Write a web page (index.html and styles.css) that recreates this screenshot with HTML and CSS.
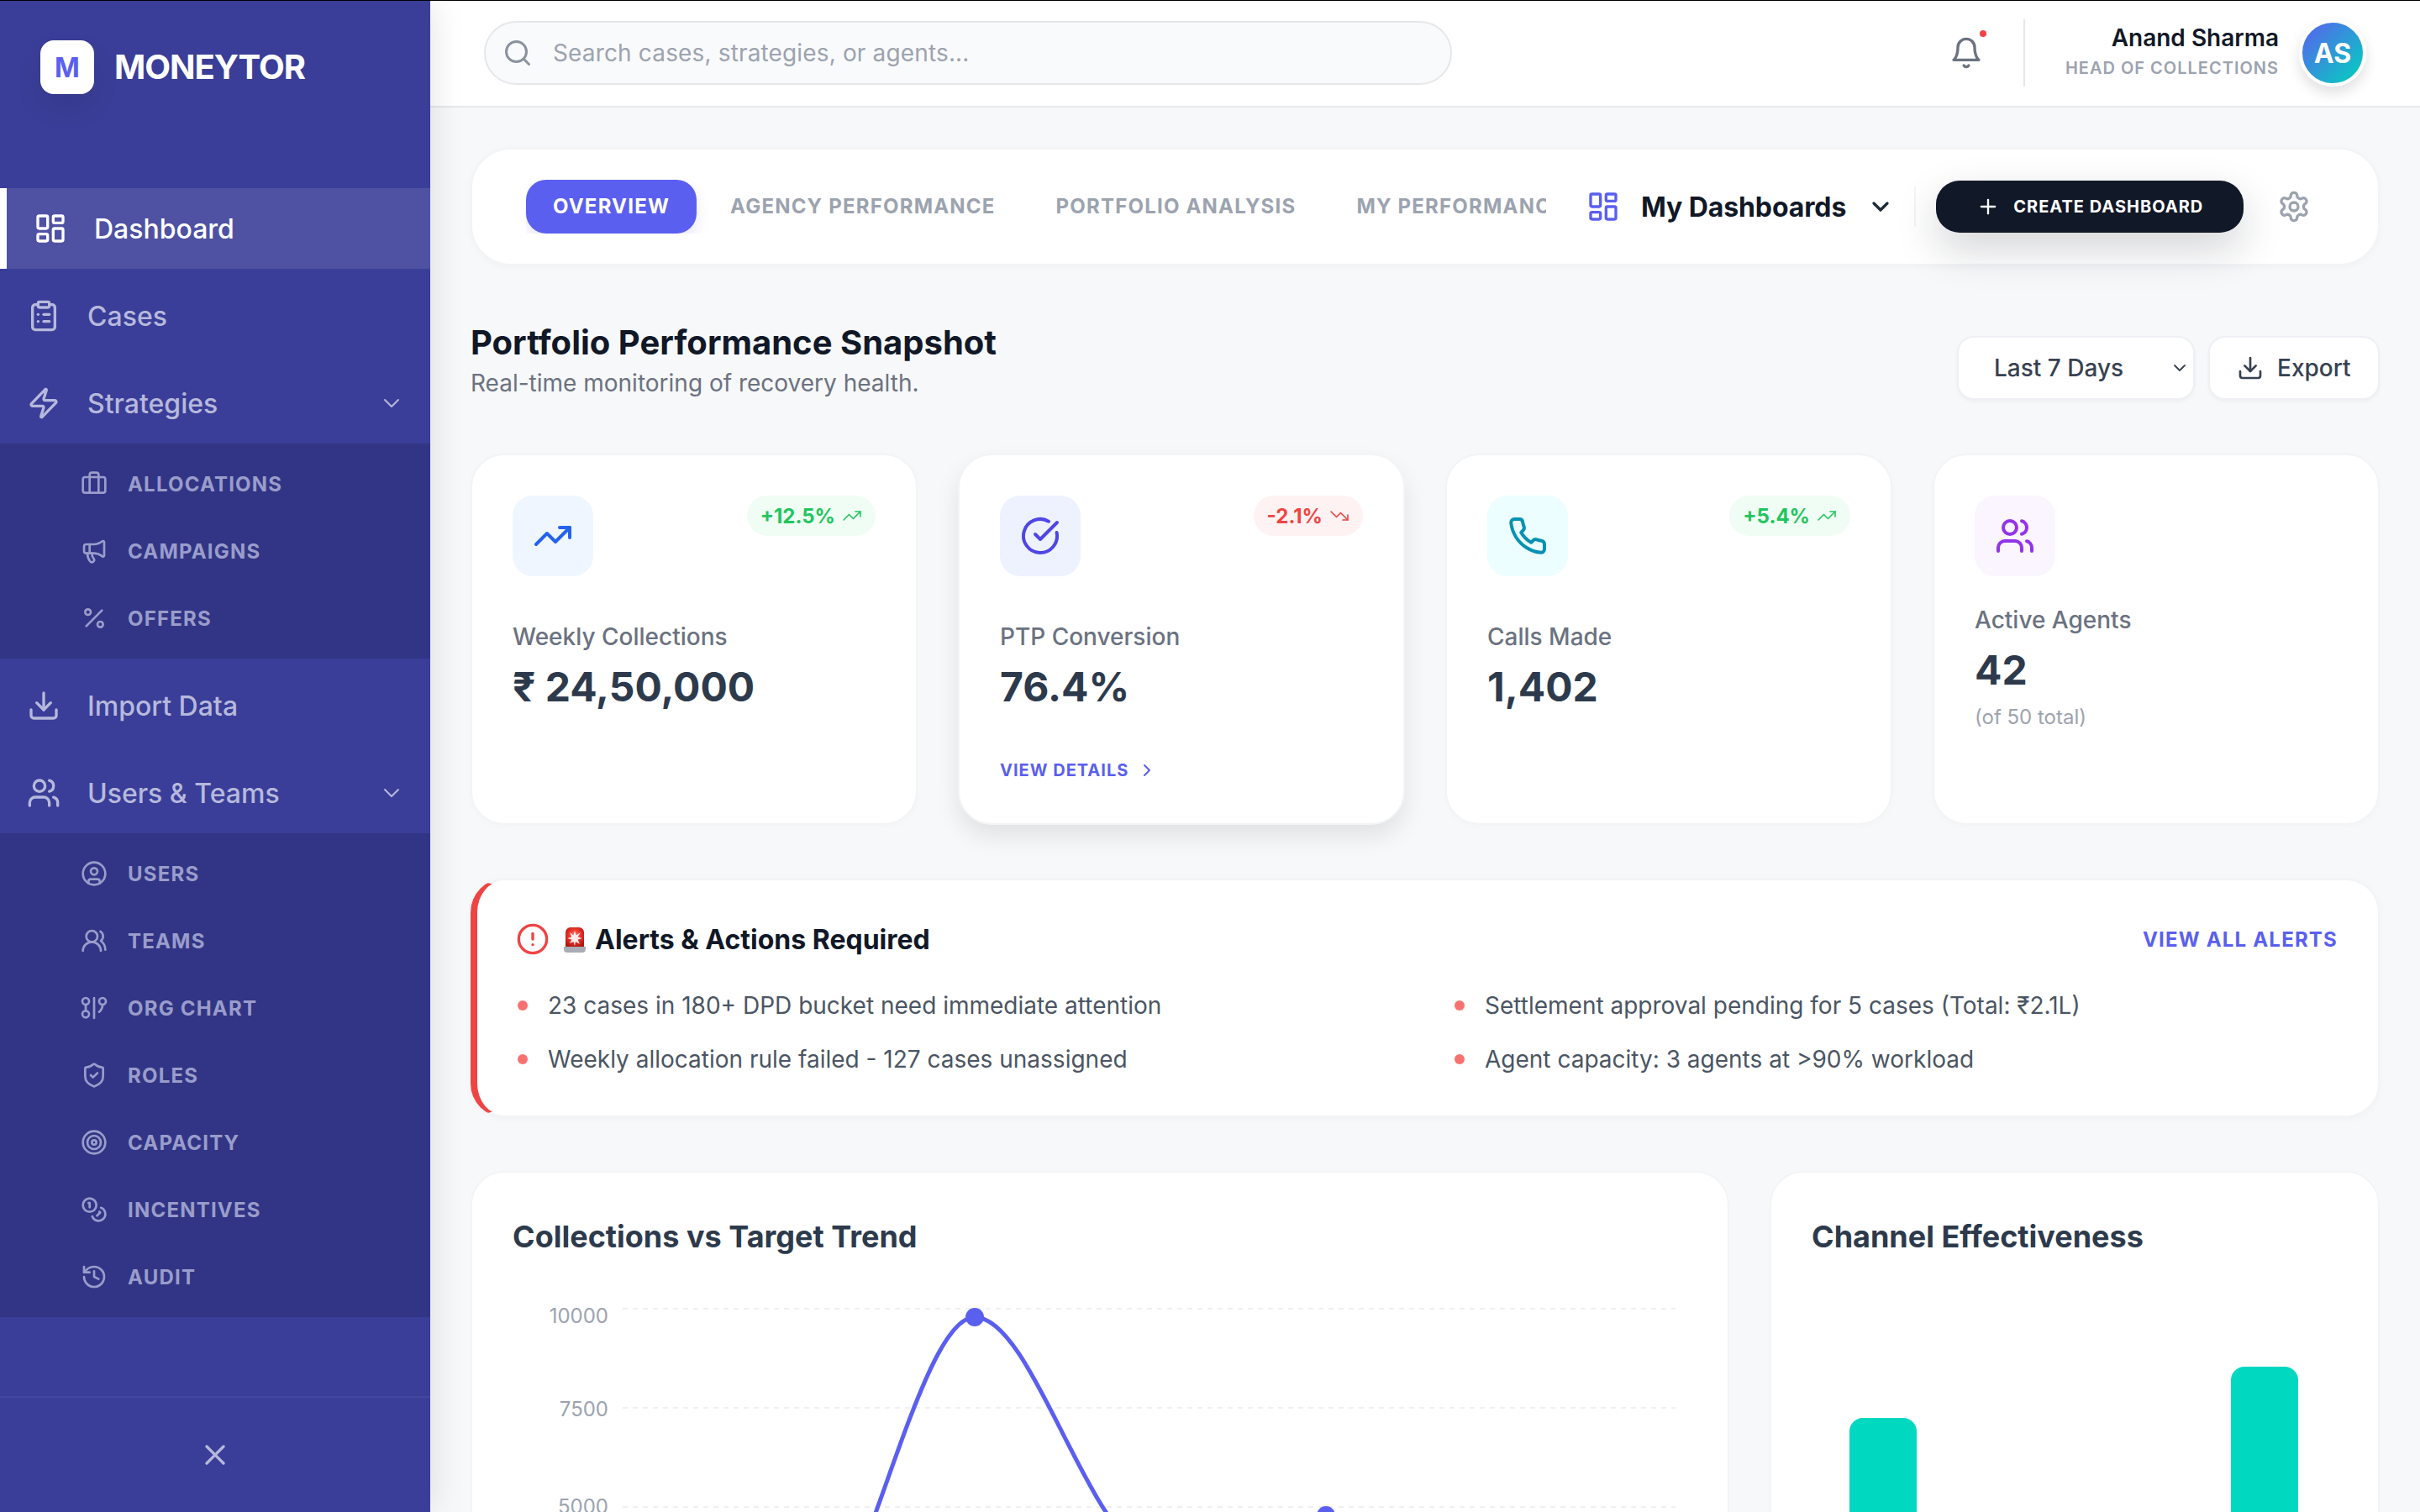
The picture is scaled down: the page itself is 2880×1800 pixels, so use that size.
FILE: index.html
```html
<!DOCTYPE html>
<html lang="en">
<head>
<meta charset="utf-8">
<title>Moneytor</title>
<link rel="stylesheet" href="styles.css">
</head>
<body>
<svg class="sprite" xmlns="http://www.w3.org/2000/svg">
  <symbol id="i-grid" viewBox="0 0 24 24"><rect x="3" y="3" width="7" height="9" rx="1"/><rect x="14" y="3" width="7" height="5" rx="1"/><rect x="14" y="12" width="7" height="9" rx="1"/><rect x="3" y="16" width="7" height="5" rx="1"/></symbol>
  <symbol id="i-clip" viewBox="0 0 24 24"><rect x="8" y="2" width="8" height="4" rx="1"/><path d="M16 4h2a2 2 0 0 1 2 2v14a2 2 0 0 1-2 2H6a2 2 0 0 1-2-2V6a2 2 0 0 1 2-2h2"/><path d="M12 11h4"/><path d="M12 16h4"/><path d="M8 11h.01"/><path d="M8 16h.01"/></symbol>
  <symbol id="i-zap" viewBox="0 0 24 24"><path d="M4 14a1 1 0 0 1-.78-1.63l9.9-10.2a.5.5 0 0 1 .86.46l-1.92 6.02A1 1 0 0 0 13 10h7a1 1 0 0 1 .78 1.63l-9.9 10.2a.5.5 0 0 1-.86-.46l1.92-6.02A1 1 0 0 0 11 14z"/></symbol>
  <symbol id="i-down" viewBox="0 0 24 24"><path d="m6 9 6 6 6-6"/></symbol>
  <symbol id="i-right" viewBox="0 0 24 24"><path d="m9 18 6-6-6-6"/></symbol>
  <symbol id="i-brief" viewBox="0 0 24 24"><path d="M16 20V4a2 2 0 0 0-2-2h-4a2 2 0 0 0-2 2v16"/><rect x="2" y="6" width="20" height="14" rx="2"/></symbol>
  <symbol id="i-mega" viewBox="0 0 24 24"><path d="M11 6a13 13 0 0 0 8.4-2.8A1 1 0 0 1 21 4v12a1 1 0 0 1-1.6.8A13 13 0 0 0 11 14H5a2 2 0 0 1-2-2V8a2 2 0 0 1 2-2z"/><path d="M6 14a12 12 0 0 0 2.4 7.2 2 2 0 0 0 3.2-2.4A8 8 0 0 1 10 14"/><path d="M8 6v8"/></symbol>
  <symbol id="i-pct" viewBox="0 0 24 24"><line x1="19" y1="5" x2="5" y2="19"/><circle cx="6.5" cy="6.5" r="2.5"/><circle cx="17.5" cy="17.5" r="2.5"/></symbol>
  <symbol id="i-dl" viewBox="0 0 24 24"><path d="M21 15v4a2 2 0 0 1-2 2H5a2 2 0 0 1-2-2v-4"/><polyline points="7 10 12 15 17 10"/><line x1="12" y1="15" x2="12" y2="3"/></symbol>
  <symbol id="i-users" viewBox="0 0 24 24"><path d="M16 21v-2a4 4 0 0 0-4-4H6a4 4 0 0 0-4 4v2"/><circle cx="9" cy="7" r="4"/><path d="M22 21v-2a4 4 0 0 0-3-3.87"/><path d="M16 3.13a4 4 0 0 1 0 7.75"/></symbol>
  <symbol id="i-cuser" viewBox="0 0 24 24"><circle cx="12" cy="12" r="10"/><circle cx="12" cy="10" r="3"/><path d="M7 20.662V19a2 2 0 0 1 2-2h6a2 2 0 0 1 2 2v1.662"/></symbol>
  <symbol id="i-uround" viewBox="0 0 24 24"><path d="M18 21a8 8 0 0 0-16 0"/><circle cx="10" cy="8" r="5"/><path d="M22 20c0-3.37-2-6.5-4-8a5 5 0 0 0-.45-8.3"/></symbol>
  <symbol id="i-org" viewBox="0 0 24 24"><circle cx="4.5" cy="6" r="3"/><path d="M4.5 9v5"/><circle cx="4.5" cy="17.5" r="3"/><path d="M12 3v18"/><circle cx="19.5" cy="6" r="3"/><path d="M19.5 9a8 8 0 0 1-3 6.5"/></symbol>
  <symbol id="i-shield" viewBox="0 0 24 24"><path d="M20 13c0 5-3.5 7.5-7.66 8.95a1 1 0 0 1-.67-.01C7.5 20.5 4 18 4 13V6a1 1 0 0 1 1-1c2 0 4.5-1.2 6.24-2.72a1.17 1.17 0 0 1 1.52 0C14.51 3.81 17 5 19 5a1 1 0 0 1 1 1z"/><path d="m9 12 2 2 4-4"/></symbol>
  <symbol id="i-target" viewBox="0 0 24 24"><circle cx="12" cy="12" r="10"/><circle cx="12" cy="12" r="6"/><circle cx="12" cy="12" r="2"/></symbol>
  <symbol id="i-coins" viewBox="0 0 24 24"><circle cx="8" cy="8" r="6"/><path d="M18.09 10.37A6 6 0 1 1 10.34 18"/><path d="M7 6h1v4"/><path d="m16.71 13.88.7.71-2.82 2.82"/></symbol>
  <symbol id="i-hist" viewBox="0 0 24 24"><path d="M3 12a9 9 0 1 0 9-9 9.75 9.75 0 0 0-6.74 2.74L3 8"/><path d="M3 3v5h5"/><path d="M12 7v5l4 2"/></symbol>
  <symbol id="i-x" viewBox="0 0 24 24"><path d="M18 6 6 18"/><path d="m6 6 12 12"/></symbol>
  <symbol id="i-search" viewBox="0 0 24 24"><circle cx="11" cy="11" r="8"/><path d="m21 21-4.3-4.3"/></symbol>
  <symbol id="i-bell" viewBox="0 0 24 24"><path d="M6 8a6 6 0 0 1 12 0c0 7 3 9 3 9H3s3-2 3-9"/><path d="M10.3 21a1.94 1.94 0 0 0 3.4 0"/></symbol>
  <symbol id="i-plus" viewBox="0 0 24 24"><path d="M5 12h14"/><path d="M12 5v14"/></symbol>
  <symbol id="i-gear" viewBox="0 0 24 24"><path d="M12.22 2h-.44a2 2 0 0 0-2 2v.18a2 2 0 0 1-1 1.73l-.43.25a2 2 0 0 1-2 0l-.15-.08a2 2 0 0 0-2.73.73l-.22.38a2 2 0 0 0 .73 2.73l.15.1a2 2 0 0 1 1 1.72v.51a2 2 0 0 1-1 1.74l-.15.09a2 2 0 0 0-.73 2.73l.22.38a2 2 0 0 0 2.73.73l.15-.08a2 2 0 0 1 2 0l.43.25a2 2 0 0 1 1 1.73V20a2 2 0 0 0 2 2h.44a2 2 0 0 0 2-2v-.18a2 2 0 0 1 1-1.73l.43-.25a2 2 0 0 1 2 0l.15.08a2 2 0 0 0 2.73-.73l.22-.39a2 2 0 0 0-.73-2.73l-.15-.08a2 2 0 0 1-1-1.74v-.5a2 2 0 0 1 1-1.74l.15-.09a2 2 0 0 0 .73-2.73l-.22-.38a2 2 0 0 0-2.73-.73l-.15.08a2 2 0 0 1-2 0l-.43-.25a2 2 0 0 1-1-1.73V4a2 2 0 0 0-2-2z"/><circle cx="12" cy="12" r="3"/></symbol>
  <symbol id="i-tup" viewBox="0 0 24 24"><polyline points="22 7 13.5 15.5 8.5 10.5 2 17"/><polyline points="16 7 22 7 22 13"/></symbol>
  <symbol id="i-tdown" viewBox="0 0 24 24"><polyline points="22 17 13.5 8.5 8.5 13.5 2 7"/><polyline points="16 17 22 17 22 11"/></symbol>
  <symbol id="i-check" viewBox="0 0 24 24"><path d="M21.801 10A10 10 0 1 1 17 3.335"/><path d="m9 11 3 3L22 4"/></symbol>
  <symbol id="i-phone" viewBox="0 0 24 24"><path d="M22 16.92v3a2 2 0 0 1-2.18 2 19.79 19.79 0 0 1-8.63-3.07 19.5 19.5 0 0 1-6-6 19.79 19.79 0 0 1-3.07-8.67A2 2 0 0 1 4.11 2h3a2 2 0 0 1 2 1.72 12.84 12.84 0 0 0 .7 2.81 2 2 0 0 1-.45 2.11L8.09 9.91a16 16 0 0 0 6 6l1.27-1.27a2 2 0 0 1 2.11-.45 12.84 12.84 0 0 0 2.81.7A2 2 0 0 1 22 16.92z"/></symbol>
  <symbol id="i-alert" viewBox="0 0 24 24"><circle cx="12" cy="12" r="10"/><line x1="12" y1="8" x2="12" y2="12"/><line x1="12" y1="16" x2="12.01" y2="16"/></symbol>
</svg>

<div class="topline"></div>
<div class="app">
  <aside class="sidebar">
    <div class="brand">
      <div class="logo">M</div>
      <span class="brand-name">MONEYTOR</span>
    </div>
    <nav class="nav">
      <a class="nav-item active"><svg class="ic ic40"><use href="#i-grid"/></svg><span>Dashboard</span></a>
      <a class="nav-item"><svg class="ic ic40"><use href="#i-clip"/></svg><span>Cases</span></a>
      <a class="nav-item"><svg class="ic ic40"><use href="#i-zap"/></svg><span>Strategies</span><svg class="ic caret"><use href="#i-down"/></svg></a>
      <div class="sub">
        <a class="sub-item"><svg class="ic ic32"><use href="#i-brief"/></svg>Allocations</a>
        <a class="sub-item"><svg class="ic ic32"><use href="#i-mega"/></svg>Campaigns</a>
        <a class="sub-item"><svg class="ic ic32"><use href="#i-pct"/></svg>Offers</a>
      </div>
      <a class="nav-item"><svg class="ic ic40"><use href="#i-dl"/></svg><span>Import Data</span></a>
      <a class="nav-item"><svg class="ic ic40"><use href="#i-users"/></svg><span>Users &amp; Teams</span><svg class="ic caret"><use href="#i-down"/></svg></a>
      <div class="sub">
        <a class="sub-item"><svg class="ic ic32"><use href="#i-cuser"/></svg>Users</a>
        <a class="sub-item"><svg class="ic ic32"><use href="#i-uround"/></svg>Teams</a>
        <a class="sub-item"><svg class="ic ic32"><use href="#i-org"/></svg>Org Chart</a>
        <a class="sub-item"><svg class="ic ic32"><use href="#i-shield"/></svg>Roles</a>
        <a class="sub-item"><svg class="ic ic32"><use href="#i-target"/></svg>Capacity</a>
        <a class="sub-item"><svg class="ic ic32"><use href="#i-coins"/></svg>Incentives</a>
        <a class="sub-item"><svg class="ic ic32"><use href="#i-hist"/></svg>Audit</a>
      </div>
    </nav>
    <div class="side-foot"><svg class="ic ic40"><use href="#i-x"/></svg></div>
  </aside>

  <div class="main">
    <header class="topbar">
      <div class="search">
        <svg class="ic search-ic"><use href="#i-search"/></svg>
        <span class="search-text">Search cases, strategies, or agents...</span>
      </div>
      <div class="top-right">
        <div class="bell"><svg class="ic ic40"><use href="#i-bell"/></svg><span class="bell-dot"></span></div>
        <div class="top-div"></div>
        <div class="who">
          <div class="who-name">Anand Sharma</div>
          <div class="who-role">Head of Collections</div>
        </div>
        <div class="avatar">AS</div>
      </div>
    </header>

    <main class="content">
      <section class="tabbar">
        <div class="tabs">
          <span class="tab on">Overview</span>
          <span class="tab">Agency Performance</span>
          <span class="tab">Portfolio Analysis</span>
          <span class="tab">My Performance</span>
        </div>
        <div class="dash-pick">
          <svg class="ic ic40 dash-ic"><use href="#i-grid"/></svg>
          <span class="dash-name">My Dashboards</span>
          <svg class="ic dash-caret"><use href="#i-down"/></svg>
        </div>
        <div class="tab-div"></div>
        <div class="create"><svg class="ic ic28"><use href="#i-plus"/></svg>Create Dashboard</div>
        <svg class="ic ic40 gear"><use href="#i-gear"/></svg>
      </section>

      <section class="heading">
        <div>
          <h1 class="title">Portfolio Performance Snapshot</h1>
          <p class="subtitle">Real-time monitoring of recovery health.</p>
        </div>
        <div class="head-actions">
          <div class="ctl select"><span>Last 7 Days</span><svg class="ic sel-caret"><use href="#i-down"/></svg></div>
          <div class="ctl export"><svg class="ic ic32"><use href="#i-dl"/></svg><span>Export</span></div>
        </div>
      </section>

      <section class="kpis">
        <article class="kpi">
          <div class="kpi-top">
            <div class="kpi-ic blue"><svg class="ic ic48"><use href="#i-tup"/></svg></div>
            <div class="badge up">+12.5%<svg class="ic ic24"><use href="#i-tup"/></svg></div>
          </div>
          <div class="kpi-label">Weekly Collections</div>
          <div class="kpi-val">₹ 24,50,000</div>
        </article>
        <article class="kpi hover">
          <div class="kpi-top">
            <div class="kpi-ic indigo"><svg class="ic ic48"><use href="#i-check"/></svg></div>
            <div class="badge dn">-2.1%<svg class="ic ic24"><use href="#i-tdown"/></svg></div>
          </div>
          <div class="kpi-label">PTP Conversion</div>
          <div class="kpi-val">76.4%</div>
          <div class="details">View Details<svg class="ic ic24"><use href="#i-right"/></svg></div>
        </article>
        <article class="kpi">
          <div class="kpi-top">
            <div class="kpi-ic cyan"><svg class="ic ic48"><use href="#i-phone"/></svg></div>
            <div class="badge up">+5.4%<svg class="ic ic24"><use href="#i-tup"/></svg></div>
          </div>
          <div class="kpi-label">Calls Made</div>
          <div class="kpi-val">1,402</div>
        </article>
        <article class="kpi">
          <div class="kpi-top tight">
            <div class="kpi-ic purple"><svg class="ic ic48"><use href="#i-users"/></svg></div>
          </div>
          <div class="kpi-label">Active Agents</div>
          <div class="kpi-val">42</div>
          <div class="kpi-note">(of 50 total)</div>
        </article>
      </section>

      <section class="alerts">
        <div class="alerts-head">
          <div class="alerts-title">
            <svg class="ic ic40 alert-ic"><use href="#i-alert"/></svg>
            <svg class="siren" viewBox="0 0 26 32"><defs><radialGradient id="sirenG" cx=".5" cy=".42" r=".62"><stop offset="0" stop-color="#ff8a80"/><stop offset=".45" stop-color="#ef3b32"/><stop offset="1" stop-color="#b3140f"/></radialGradient></defs><path class="siren-body" d="M2 25V8a6 6 0 0 1 6-6h10a6 6 0 0 1 6 6v17z"/><path class="siren-base" d="M0 25h26v3a4 4 0 0 1-4 4H4a4 4 0 0 1-4-4z"/><path class="siren-spark" d="M13 6l1.6 5.4L20 8l-3.4 5.4L22 15l-5.4 1.6L19 22l-5-3-1 5-1.6-5L7 21l2.4-4.4L4 15l5.4-1.6L7 8l4.4 3.4z"/></svg>
            <span>Alerts &amp; Actions Required</span>
          </div>
          <span class="view-all">View All Alerts</span>
        </div>
        <ul class="alert-list">
          <li>23 cases in 180+ DPD bucket need immediate attention</li>
          <li>Settlement approval pending for 5 cases (Total: ₹2.1L)</li>
          <li>Weekly allocation rule failed - 127 cases unassigned</li>
          <li>Agent capacity: 3 agents at &gt;90% workload</li>
        </ul>
      </section>

      <section class="charts">
        <article class="chart-card">
          <h2 class="chart-title">Collections vs Target Trend</h2>
          <svg class="trend" viewBox="0 0 1498 600">
            <g class="grid-lines">
              <line x1="181" y1="164" x2="1434" y2="164"/>
              <line x1="181" y1="282" x2="1434" y2="282"/>
              <line x1="181" y1="400" x2="1434" y2="400"/>
            </g>
            <g class="axis">
              <text x="164" y="181">10000</text>
              <text x="164" y="292">7500</text>
              <text x="164" y="408">5000</text>
            </g>
            <path class="trend-line" d="M391 565C461 565 530 174 600 174C670 174 739 450 809 450C879 450 948 410 1018 410"/>
            <circle class="trend-dot" cx="600" cy="174" r="11"/>
            <circle class="trend-dot" cx="1018" cy="410" r="11"/>
          </svg>
        </article>
        <article class="chart-card">
          <h2 class="chart-title">Channel Effectiveness</h2>
          <div class="bars">
            <div class="bar bar-a"></div>
            <div class="bar bar-b"></div>
          </div>
        </article>
      </section>
    </main>
  </div>
</div>
</body>
</html>
```
FILE: styles.css
```css
* { box-sizing: border-box; }
html, body { margin: 0; height: 100%; }
body {
  width: 2880px;
  height: 1800px;
  overflow: hidden;
  font-family: Inter, "Noto Sans", "Liberation Sans", sans-serif;
  background: #f7f8fa;
  color: #111827;
}
h1, h2, p, ul { margin: 0; padding: 0; }
.sprite { display: none; }
.topline { position: absolute; top: 0; left: 0; right: 0; height: 1px; background: #000; z-index: 10; }
.app { display: flex; height: 1800px; }

.ic { fill: none; stroke: currentColor; stroke-width: 2; stroke-linecap: round; stroke-linejoin: round; flex: none; display: block; }
.ic24 { width: 24px; height: 24px; }
.ic28 { width: 28px; height: 28px; }
.ic32 { width: 32px; height: 32px; }
.ic40 { width: 40px; height: 40px; }
.ic48 { width: 48px; height: 48px; }

/* Sidebar */
.sidebar {
  width: 512px; flex: none; height: 1800px;
  background: #3a3e98; color: #b7b9dc;
  display: flex; flex-direction: column;
  box-shadow: 0 0 40px rgba(0,0,0,.12);
  position: relative; z-index: 5;
}
.brand { height: 224px; flex: none; display: flex; align-items: flex-start; gap: 24px; padding: 48px 0 0 48px; }
.logo {
  width: 64px; height: 64px; border-radius: 16px; background: #fff; color: #5b5fef;
  display: flex; align-items: center; justify-content: center;
  font-size: 32px; font-weight: 700;
  box-shadow: 0 16px 32px rgba(0,0,0,.08);
}
.brand-name { font-size: 40px; line-height: 64px; font-weight: 700; color: #fff; letter-spacing: -1px; }
.nav { flex: 1; display: flex; flex-direction: column; gap: 8px; }
.nav-item {
  height: 96px; flex: none; display: flex; align-items: center; gap: 32px;
  padding: 0 30px 0 32px; font-size: 32px; font-weight: 500;
}
.nav-item.active { background: #4f52a3; color: #fff; border-left: 8px solid #fff; }
.caret { width: 32px; height: 32px; margin-left: auto; stroke-width: 1.5; }
.sub { background: #323585; padding: 8px 0; color: #9a9dcb; margin-top: -8px; }
.sub-item {
  height: 80px; display: flex; align-items: center; gap: 24px; padding-left: 96px;
  font-size: 24px; font-weight: 700; letter-spacing: 1.2px; text-transform: uppercase;
}
.side-foot {
  height: 138px; flex: none; border-top: 2px solid #43479f;
  display: flex; align-items: center; justify-content: center; color: #b7b9dc;
}

/* Main */
.main { flex: 1; min-width: 0; display: flex; flex-direction: column; height: 1800px; overflow: hidden; }
.topbar {
  height: 128px; flex: none; background: #fff; border-bottom: 2px solid #e5e7eb;
  display: flex; align-items: center; justify-content: space-between; padding: 0 64px;
}
.search {
  width: 1152px; height: 76px; border: 2px solid #e5e7eb; border-radius: 38px; background: #f9fafb;
  display: flex; align-items: center; padding-left: 20px; gap: 24px;
}
.search-ic { width: 36px; height: 36px; color: #8b92a0; }
.search-text { font-size: 28px; color: #9ca3af; letter-spacing: .15px; }
.top-right { display: flex; align-items: center; }
.bell { position: relative; color: #6b7280; margin-right: 48px; }
.bell-dot { position: absolute; top: -7px; right: -4px; width: 8px; height: 8px; border-radius: 50%; background: #ef4444; }
.top-div { width: 2px; height: 80px; background: #e5e7eb; margin-right: 48px; }
.who { text-align: right; margin-right: 24px; padding-bottom: 5px; }
.who-name { font-size: 28px; line-height: 40px; font-weight: 600; color: #111827; }
.who-role { font-size: 20px; line-height: 32px; font-weight: 600; color: #9ca3af; letter-spacing: 1px; text-transform: uppercase; }
.avatar {
  width: 80px; height: 80px; border-radius: 50%; border: 4px solid #fff;
  background: linear-gradient(135deg, #5b5fef, #00d4be);
  color: #fff; font-size: 32px; font-weight: 700;
  display: flex; align-items: center; justify-content: center;
  box-shadow: 0 8px 16px rgba(0,0,0,.12);
}

.content { padding: 48px; display: flex; flex-direction: column; flex: 1; min-height: 0; }

/* Tab bar */
.tabbar {
  height: 140px; flex: none; background: #fff; border: 2px solid #f3f4f6; border-radius: 48px;
  display: flex; align-items: center; padding: 0 64px;
  box-shadow: 0 2px 8px rgba(0,0,0,.03);
}
.tabs { width: 1214px; flex: none; display: flex; gap: 8px; overflow: hidden; }
.tab {
  flex: none; height: 64px; padding: 0 32px 2px; border-radius: 24px;
  display: flex; align-items: center;
  font-size: 24px; font-weight: 700; letter-spacing: 1.2px; text-transform: uppercase; color: #9ca3af;
}
.tab.on { background: #5b5fef; color: #fff; box-shadow: 0 8px 16px rgba(91,95,239,.15); }
.dash-pick { display: flex; align-items: center; margin-left: 48px; }
.dash-ic { color: #5b5fef; margin-right: 25px; }
.dash-name { font-size: 32px; font-weight: 700; color: #111827; white-space: nowrap; letter-spacing: -.1px; }
.dash-caret { width: 32px; height: 32px; margin-left: 25px; stroke-width: 2.5; color: #1f2937; }
.tab-div { width: 2px; height: 48px; background: #f3f4f6; margin: 0 24px; }
.create {
  height: 62px; padding: 0 48px; border-radius: 28px; background: #111827; color: #fff;
  display: flex; align-items: center; gap: 16px;
  font-size: 20px; font-weight: 700; letter-spacing: 1px; text-transform: uppercase; white-space: nowrap;
  box-shadow: 0 20px 50px rgba(17,24,39,.18);
}
.gear { color: #9ca3af; margin-left: 40px; }

/* Heading */
.heading { display: flex; justify-content: space-between; align-items: flex-end; margin-top: 64px; height: 96px; flex: none; }
.title { font-size: 40px; line-height: 56px; font-weight: 700; color: #111827; }
.subtitle { font-size: 28px; line-height: 40px; color: #6b7280; }
.head-actions { display: flex; gap: 16px; }
.ctl {
  height: 76px; background: #fff; border: 2px solid #eef0f3; border-radius: 20px;
  display: flex; align-items: center; font-size: 28px; font-weight: 500; color: #374151;
  box-shadow: 0 2px 4px rgba(0,0,0,.04);
}
.select { width: 283px; padding: 0 4px 0 42px; justify-content: space-between; }
.sel-caret { width: 24px; height: 24px; stroke-width: 1.8; }
.export { width: 204px; padding-left: 32px; gap: 16px; }

/* KPI */
.kpis { display: grid; grid-template-columns: repeat(4, 1fr); gap: 48px; margin-top: 64px; flex: none; }
.kpi {
  height: 442px; background: #fff; border: 2px solid #f3f4f6; border-radius: 40px; padding: 48px;
  box-shadow: 0 2px 8px rgba(0,0,0,.02);
}
.kpi.hover { box-shadow: 0 14px 28px rgba(0,0,0,.09); }
.kpi-top { display: flex; justify-content: space-between; align-items: flex-start; margin-bottom: 52px; }
.kpi-top.tight { margin-bottom: 32px; }
.kpi-ic { width: 96px; height: 96px; border-radius: 24px; display: flex; align-items: center; justify-content: center; }
.kpi-ic .ic { stroke-width: 2; }
.blue { background: #eff6ff; color: #2563eb; }
.indigo { background: #eef2ff; color: #4f46e5; }
.cyan { background: #ecfeff; color: #0891b2; }
.purple { background: #faf5ff; color: #9333ea; }
.badge {
  height: 48px; padding: 0 16px; border-radius: 24px; display: flex; align-items: center; gap: 8px;
  font-size: 24px; font-weight: 700;
}
.badge .ic { stroke-width: 1.6; }
.up { background: #f0fdf4; color: #22c55e; }
.dn { background: #fef2f2; color: #ef4444; }
.kpi-label { font-size: 28px; line-height: 40px; font-weight: 500; color: #6b7280; }
.kpi-val { font-size: 48px; line-height: 64px; font-weight: 700; color: #2d3a4c; margin-top: 8px; }
.kpi-note { font-size: 24px; line-height: 32px; color: #9ca3af; margin-top: 8px; }
.details {
  margin-top: 51px; display: flex; align-items: center; gap: 10px;
  font-size: 20px; line-height: 32px; font-weight: 700; letter-spacing: 1px; text-transform: uppercase; color: #5b5fef;
}

/* Alerts */
.alerts {
  margin-top: 64px; height: 284px; flex: none; background: #fff; border: 2px solid #f3f4f6; border-left: 8px solid #ef4444;
  border-radius: 40px; padding: 46px 48px 0;
  box-shadow: 0 2px 8px rgba(0,0,0,.03);
}
.alerts-head { display: flex; justify-content: space-between; align-items: center; height: 48px; }
.alerts-title { display: flex; align-items: center; font-size: 32px; font-weight: 700; color: #111827; margin-left: -2px; }
.alert-ic { color: #ef4444; margin-right: 17px; }
.siren { width: 26px; height: 32px; margin-right: 11px; flex: none; }
.siren-body { fill: url(#sirenG); }
.siren-base { fill: #a8adb5; }
.siren-spark { fill: #fff; opacity: .9; }
.view-all { font-size: 24px; font-weight: 700; letter-spacing: 1.2px; text-transform: uppercase; color: #5b5fef; }
.alert-list { list-style: none; margin-top: 35px; display: grid; grid-template-columns: 1fr 1fr; column-gap: 64px; row-gap: 24px; }
.alert-list li { font-size: 28px; line-height: 40px; color: #4b5563; display: flex; align-items: center; gap: 24px; }
.alert-list li::before { content: ""; width: 12px; height: 12px; border-radius: 50%; background: #f87171; flex: none; }

/* Charts */
.charts { display: grid; grid-template-columns: 1498fr 726fr; gap: 48px; margin-top: 64px; flex: none; }
.chart-card { height: 600px; background: #fff; border: 2px solid #f3f4f6; border-radius: 40px; position: relative; overflow: hidden; padding: 48px; }
.chart-title { font-size: 36px; line-height: 56px; font-weight: 700; color: #2d3a4c; }
.trend { position: absolute; left: -2px; top: -2px; width: 1498px; height: 600px; }
.grid-lines line { stroke: #eef0f3; stroke-width: 2; stroke-dasharray: 6 6; }
.axis text { font-family: Inter, sans-serif; font-size: 24px; fill: #9ca3af; text-anchor: end; }
.trend-line { fill: none; stroke: #5b5fef; stroke-width: 5; }
.trend-dot { fill: #5b5fef; }
.bars { position: absolute; left: 0; right: 0; top: 0; bottom: 0; }
.bar { position: absolute; width: 80px; bottom: 0; background: #00d8bf; border-radius: 16px 16px 0 0; }
.bar-a { left: 93px; top: 292px; }
.bar-b { left: 547px; top: 231px; }
```
